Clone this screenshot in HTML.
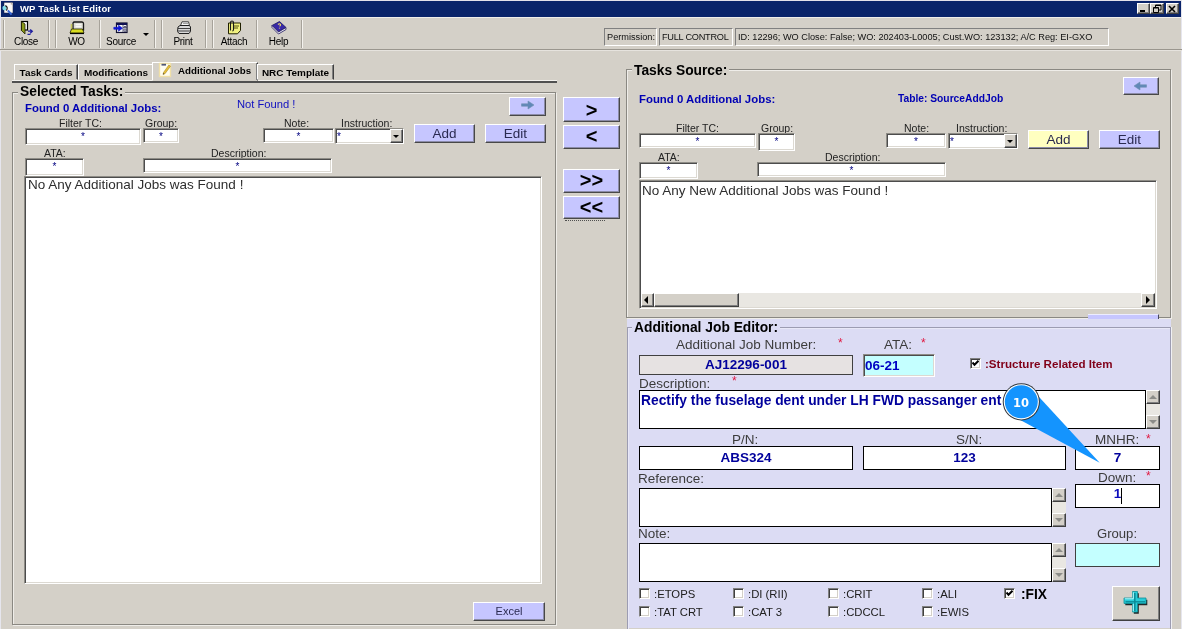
<!DOCTYPE html>
<html>
<head>
<meta charset="utf-8">
<title>WP Task List Editor</title>
<style>
html,body{margin:0;padding:0;}
body{width:1182px;height:629px;position:relative;overflow:hidden;background:#d4d0c8;font-family:"Liberation Sans",sans-serif;font-size:11px;color:#000;}
.a{position:absolute;box-sizing:border-box;}
.t{position:absolute;white-space:nowrap;line-height:1;}
/* classic sunken edit */
.sunk{background:#fff;border:1px solid;border-color:#8e8c86 #fff #fff #8e8c86;box-shadow:inset 1px 1px 0 #4c4c4c, inset -1px -1px 0 #dcd9d2;}
.flat{background:#fff;border:1px solid #000;}
/* lavender raised button */
.btn{background:#c6c6ff;border:1px solid;border-color:#fff #484848 #484848 #fff;box-shadow:inset -1px -1px 0 #8c8ca8;text-align:center;color:#2a2a50;}
.gbtn{background:#d4d0c8;border:1px solid;border-color:#fff #404040 #404040 #fff;box-shadow:inset -1px -1px 0 #808080;}
.grp{border:1px solid #8a8882;box-shadow:1px 1px 0 #efede9, inset 1px 1px 0 #efede9;}
.cap{font-weight:bold;font-size:13.800px;color:#000;padding:0 2px;}
.lbl{font-size:10.500px;color:#222;}
.star{color:#000080;font-size:10px;text-align:center;line-height:15px;}
.blueb{font-weight:bold;color:#0000b4;font-size:11.400px;}
.big{font-size:13.500px;color:#2e2e2e;}
.val{font-weight:bold;color:#00009c;font-size:13.500px;text-align:center;}
.cb{background:#fff;border:1px solid;border-color:#808080 #fff #fff #808080;box-shadow:inset 1px 1px 0 #404040, inset -1px -1px 0 #d4d0c8;width:11px;height:11px;}
.red{color:#e01840;font-size:12px;}
.sep{width:2px;border-left:1px solid #a6a29a;border-right:1px solid #f4f2ee;}
.sb{background:#e9e7e2;}
.elbl{font-size:13.500px;color:#3c3c3c;}
.clbl{font-size:11.300px;color:#202020;}
.val{line-height:18px;}
.up{width:0;height:0;border-left:4px solid transparent;border-right:4px solid transparent;border-bottom:4px solid #8c8c88;}
.dn{width:0;height:0;border-left:4px solid transparent;border-right:4px solid transparent;border-top:4px solid #8c8c88;}
.tab{font-weight:bold;font-size:9.950px;line-height:15px;text-align:center;border:1px solid;border-color:#fff #404040 transparent #fff;box-shadow:inset -1px 0 0 #808080;white-space:nowrap;color:#000;}
.tab.sel{background:#d4d0c8;line-height:15px;text-align:left;font-size:9.750px;}
.mv{font-weight:bold;font-size:20px;line-height:21px;color:#000;letter-spacing:0;}
.tb{font-size:10px;text-align:center;color:#000;letter-spacing:-0.3px;}
.stat{border:1px solid;border-color:#808080 #fff #fff #808080;font-size:9.200px;line-height:17px;padding-left:2px;white-space:nowrap;color:#111;overflow:hidden;}
</style>
</head>
<body>
<div id="root" style="position:absolute;left:0;top:0;width:1182px;height:629px;will-change:transform;">

<!-- title bar -->
<div class="a" style="left:0;top:0;width:1182px;height:1px;background:#e4e2ea;"></div>
<div class="a" style="left:0;top:0;width:1px;height:629px;background:#e6e6ee;"></div>
<div class="a" style="left:1181px;top:0;width:1px;height:629px;background:#e6e6ee;"></div>
<div class="a" style="left:1px;top:17px;width:1180px;height:1px;background:#f0eeea;"></div>
<div class="a" style="left:1px;top:1px;width:1180px;height:16px;background:#0a246a;"></div>
<svg class="a" style="left:1px;top:1px" width="15" height="16" viewBox="0 0 15 16">
  <rect x="3" y="1.300" width="9" height="10.700" fill="#fbf8f4" stroke="#101840" stroke-width="0.500"/>
  <path d="M9.800 1.300 L12 3.600 H9.800 Z" fill="#b8a898"/>
  <circle cx="3.600" cy="7.100" r="2.300" fill="#80dce8"/>
  <path d="M4.300 4.600 A2.700 2.700 0 0 1 5 9.500" fill="none" stroke="#101010" stroke-width="1.100"/>
  <path d="M6.800 9.300 L10.600 13.600" stroke="#3868d8" stroke-width="2"/>
</svg>
<div class="t" style="left:20px;top:3.500px;color:#fff;font-weight:bold;font-size:9.500px;letter-spacing:0.150px;">WP Task List Editor</div>
<!-- window buttons -->
<div class="a gbtn" style="left:1137px;top:3px;width:13px;height:11px;"></div>
<div class="a" style="left:1140px;top:10px;width:5px;height:2px;background:#000;"></div>
<div class="a gbtn" style="left:1150px;top:3px;width:14px;height:11px;"></div>
<svg class="a" style="left:1153px;top:4px" width="9" height="9" viewBox="0 0 9 9"><path d="M2.5 1 H8 V6 H6 M2.5 1 V3 M2.5 1.5 H8 M0.5 3.5 H5.5 V8.500 H0.5 Z M0.5 4 H5.5" fill="none" stroke="#000" stroke-width="1"/></svg>
<div class="a gbtn" style="left:1166px;top:3px;width:13px;height:11px;"></div>
<svg class="a" style="left:1168px;top:4.500px" width="9" height="8" viewBox="0 0 9 8"><path d="M1 1 L7 7 M7 1 L1 7" stroke="#000" stroke-width="1.6"/></svg>

<!-- toolbar -->
<div class="a" style="left:0;top:49px;width:1182px;height:1px;background:#9a968e;"></div>
<div class="a" style="left:0;top:50px;width:1182px;height:1px;background:#e6e3de;"></div>
<div class="a sep" style="left:3px;top:20px;height:28px;"></div>
<div class="a sep" style="left:48px;top:20px;height:28px;"></div>
<div class="a sep" style="left:55px;top:20px;height:28px;"></div>
<div class="a sep" style="left:99px;top:20px;height:28px;"></div>
<div class="a sep" style="left:154px;top:20px;height:28px;"></div>
<div class="a sep" style="left:161px;top:20px;height:28px;"></div>
<div class="a sep" style="left:205px;top:20px;height:28px;"></div>
<div class="a sep" style="left:212px;top:20px;height:28px;"></div>
<div class="a sep" style="left:256px;top:20px;height:28px;"></div>
<div class="a sep" style="left:301px;top:20px;height:28px;"></div>
<div class="t tb" style="left:14px;top:37px;width:23px;">Close</div>
<div class="t tb" style="left:66px;top:37px;width:21px;">WO</div>
<div class="t tb" style="left:106px;top:37px;width:30px;">Source</div>
<div class="t tb" style="left:172px;top:37px;width:22px;">Print</div>
<div class="t tb" style="left:220px;top:37px;width:28px;">Attach</div>
<div class="t tb" style="left:268px;top:37px;width:21px;">Help</div>
<div class="a" style="left:143px;top:33px;width:0;height:0;border-left:3px solid transparent;border-right:3px solid transparent;border-top:3px solid #000;"></div>
<!-- ICONS -->
<!-- close: door -->
<svg class="a" style="left:18px;top:19px" width="18" height="18" viewBox="18 19 18 18">
  <rect x="21.500" y="21.500" width="6" height="8.500" fill="#fff" stroke="#000" stroke-width="1.200"/>
  <path d="M21.500 21.500 L25 24 L25 34 L21.500 30.500 Z" fill="#8a9a18" stroke="#202000" stroke-width="0.800"/>
  <path d="M28 31.200 H31.800 M30.200 29.500 L32.300 31.300 L30.200 33.200 M27.500 34.300 H30.500" fill="none" stroke="#2020a0" stroke-width="1.300"/>
</svg>
<!-- WO: folder with doc -->
<svg class="a" style="left:68px;top:20px" width="18" height="16" viewBox="68 20 18 16">
  <path d="M73 23 Q73.500 22 74.500 22 H82 Q83.500 22.200 83.500 23.500 V30 H73 Z" fill="#dcdcd4" stroke="#181818" stroke-width="1.300"/>
  <path d="M75.500 24.800 H81.500 M75.500 26.800 H81.500" stroke="#fff" stroke-width="1.100"/>
  <path d="M71.500 24 V29.500" stroke="#c8c860" stroke-width="1.600"/>
  <path d="M71.500 29 H82.500 L84 33 H70 Z" fill="#d8dc20" stroke="#202000" stroke-width="0.800"/>
  <path d="M70 33.500 H84" stroke="#000" stroke-width="1.200"/>
</svg>
<!-- Source: table with arrow -->
<svg class="a" style="left:112px;top:21px" width="18" height="14" viewBox="112 21 18 14">
  <rect x="116.500" y="23" width="10.500" height="9.500" fill="#f4f4f4" stroke="#101030" stroke-width="1.200"/>
  <rect x="116.500" y="23" width="10.500" height="2" fill="#101050"/>
  <path d="M123 25 V32 M123 27.500 H127 M123 30 H127" stroke="#404060" stroke-width="0.800"/>
  <rect x="124" y="26" width="2" height="1" fill="#606080"/><rect x="124" y="28.500" width="2" height="1" fill="#606080"/><rect x="124" y="30.800" width="2" height="1" fill="#606080"/>
  <path d="M113.800 27.300 H118.500 V25.200 L122.500 28.200 L118.500 31.200 V29.200 H113.800 Z" fill="#1018d8" stroke="#1018c8" stroke-width="0.600"/>
</svg>
<!-- Print -->
<svg class="a" style="left:175px;top:20px" width="18" height="16" viewBox="175 20 18 16">
  <path d="M180.500 25.500 L182 21.800 H188.500 L189.500 25.500" fill="#f4f4f4" stroke="#303030" stroke-width="0.900"/>
  <path d="M183 23.500 H188" stroke="#808080" stroke-width="0.700"/>
  <path d="M178 27 L180 25.500 H189.500 L190.500 27 V31.500 L189 33.500 H179 L177.500 31.500 Z" fill="#d8d8d8" stroke="#202020" stroke-width="1"/>
  <path d="M178 28.500 H190.500 M178 31 H190.500" stroke="#303030" stroke-width="0.900"/>
</svg>
<!-- Attach -->
<svg class="a" style="left:226px;top:19px" width="18" height="17" viewBox="226 19 18 17">
  <path d="M228.500 23 H240.500 V30.500 L237.500 33.800 H228.500 Z" fill="#f0f080" stroke="#202000" stroke-width="1"/>
  <path d="M233 26 H239 M233 28 H238" stroke="#404000" stroke-width="0.900"/>
  <path d="M230.500 30.500 V22.800 Q230.500 21 232 21 Q233.500 21 233.500 22.800 V29.500 Q233.500 31 232.300 31" fill="none" stroke="#181818" stroke-width="1.100"/>
</svg>
<!-- Help: book -->
<svg class="a" style="left:270px;top:19px" width="18" height="17" viewBox="270 19 18 17">
  <path d="M272 25.500 L279.500 21.500 L286 27.500 L278.500 32 Z" fill="#3828a8" stroke="#181860" stroke-width="0.800"/>
  <path d="M272 25.500 L272 27.500 L278.500 34 L286 29.500 L286 27.500 L278.500 32 Z" fill="#e8e8f0" stroke="#201860" stroke-width="0.800"/>
  <path d="M278 24.500 Q279.500 23 280.500 24.500 Q280.800 25.500 279.600 26.300 M279.500 27.800 V28.500" fill="none" stroke="#f0e060" stroke-width="1.200"/>
</svg>

<!-- status panels -->
<div class="a stat" style="left:604px;top:28px;width:53px;height:18px;">Permission:</div>
<div class="a stat" style="left:659px;top:28px;width:74px;height:18px;"><span style="letter-spacing:-0.250px">FULL CONTROL</span></div>
<div class="a stat" style="left:735px;top:28px;width:374px;height:18px;">ID: 12296; WO Close: False; WO: 202403-L0005; Cust.WO: 123132; A/C Reg: EI-GXO</div>
<!-- MAIN -->
<!-- tabs -->
<div class="a" style="left:12px;top:80px;width:545px;height:1px;background:#f4f2ee;"></div>
<div class="a" style="left:12px;top:81px;width:545px;height:2px;background:#505050;"></div>
<div class="a tab" style="left:14px;top:64px;width:64px;height:16px;">Task Cards</div>
<div class="a tab" style="left:78px;top:64px;width:76px;height:16px;">Modifications</div>
<div class="a tab sel" style="left:152px;top:62px;width:106px;height:19px;padding-left:25px;">Additional Jobs</div>
<div class="a tab" style="left:257px;top:64px;width:77px;height:16px;">NRC Template</div>
<svg class="a" style="left:158px;top:62px" width="15" height="16" viewBox="0 0 15 16">
  <rect x="1.500" y="1.500" width="11" height="13" fill="#fffdf0" stroke="#f0e0a8" stroke-width="1.400"/>
  <rect x="3.500" y="1.800" width="4.500" height="1.800" fill="#505878"/>
  <path d="M5.500 10.500 L10.800 3 L12.500 4.200 L7 11.700 L5 12.500 Z" fill="#e8c038" stroke="#a88828" stroke-width="0.600"/>
  <path d="M5 12.500 L5.400 11 L6.300 11.800 Z" fill="#404040"/>
</svg>

<!-- left group -->
<div class="a grp" style="left:12px;top:92px;width:544px;height:533px;"></div>
<div class="t cap" style="left:18px;top:85px;background:#d4d0c8;">Selected Tasks:</div>
<div class="t blueb" style="left:25px;top:103px;">Found 0 Additional Jobs:</div>
<div class="t" style="left:237px;top:99px;font-size:11.200px;color:#1010c0;">Not Found !</div>
<div class="a btn" style="left:509px;top:97px;width:37px;height:19px;"></div>
<svg class="a" style="left:520px;top:100px" width="16" height="10" viewBox="0 0 16 10"><path d="M1.500 3.800 H8 V1 L14 5 L8 9 V6.200 H1.500 Z" fill="#6088b8" stroke="#7090b0" stroke-width="0.600"/></svg>

<div class="t lbl" style="left:59px;top:117.500px;">Filter TC:</div>
<div class="t lbl" style="left:145px;top:117.500px;">Group:</div>
<div class="t lbl" style="left:284px;top:117.500px;">Note:</div>
<div class="t lbl" style="left:341px;top:117.500px;">Instruction:</div>
<div class="a sunk star" style="left:25px;top:128px;width:116px;height:17px;">*</div>
<div class="a sunk star" style="left:143px;top:128px;width:36px;height:15px;">*</div>
<div class="a sunk star" style="left:263px;top:128px;width:71px;height:15px;">*</div>
<div class="a sunk star" style="left:335px;top:128px;width:69px;height:16px;text-align:left;padding-left:1px;">*</div>
<div class="a gbtn" style="left:390px;top:129px;width:13px;height:14px;"></div>
<div class="a" style="left:393px;top:135px;width:0;height:0;border-left:3.500px solid transparent;border-right:3.500px solid transparent;border-top:3.500px solid #000;"></div>
<div class="a btn" style="left:414px;top:124px;width:61px;height:19px;font-size:13.500px;line-height:18px;">Add</div>
<div class="a btn" style="left:485px;top:124px;width:61px;height:19px;font-size:13.500px;line-height:18px;">Edit</div>
<div class="t lbl" style="left:44px;top:148px;">ATA:</div>
<div class="t lbl" style="left:211px;top:148px;">Description:</div>
<div class="a sunk star" style="left:25px;top:158px;width:59px;height:18px;">*</div>
<div class="a sunk star" style="left:143px;top:158px;width:189px;height:15px;">*</div>
<div class="a sunk" style="left:24px;top:176px;width:518px;height:408px;"></div>
<div class="t big" style="left:28px;top:178px;">No Any Additional Jobs was Found !</div>
<div class="a btn" style="left:473px;top:602px;width:72px;height:19px;font-size:11px;line-height:17px;">Excel</div>

<!-- middle buttons -->
<div class="a btn mv" style="left:563px;top:97px;width:57px;height:25px;line-height:24px;">&gt;</div>
<div class="a btn mv" style="left:563px;top:125px;width:57px;height:24px;">&lt;</div>
<div class="a btn mv" style="left:563px;top:169px;width:57px;height:24px;">&gt;&gt;</div>
<div class="a btn mv" style="left:563px;top:196px;width:57px;height:23px;">&lt;&lt;</div>
<div class="a" style="left:565px;top:220px;width:40px;height:0;border-top:1px dotted #505050;"></div>
<!-- RIGHT -->
<div class="a grp" style="left:626px;top:69px;width:545px;height:249px;"></div>
<div class="t cap" style="left:632px;top:64px;background:#d4d0c8;">Tasks Source:</div>
<div class="t blueb" style="left:639px;top:94px;">Found 0 Additional Jobs:</div>
<div class="t blueb" style="left:898px;top:94px;font-size:10.250px;">Table: SourceAddJob</div>
<div class="a btn" style="left:1123px;top:77px;width:36px;height:18px;"></div>
<svg class="a" style="left:1132px;top:81px" width="16" height="10" viewBox="0 0 16 10"><path d="M14.500 3.800 H8 V1 L2 5 L8 9 V6.200 H14.500 Z" fill="#6088b8" stroke="#7090b0" stroke-width="0.600"/></svg>
<div class="t lbl" style="left:676px;top:122.500px;">Filter TC:</div>
<div class="t lbl" style="left:761px;top:122.500px;">Group:</div>
<div class="t lbl" style="left:904px;top:122.500px;">Note:</div>
<div class="t lbl" style="left:956px;top:122.500px;">Instruction:</div>
<div class="a sunk star" style="left:639px;top:133px;width:117px;height:15px;">*</div>
<div class="a sunk star" style="left:758px;top:133px;width:37px;height:18px;">*</div>
<div class="a sunk star" style="left:886px;top:133px;width:60px;height:15px;">*</div>
<div class="a sunk star" style="left:948px;top:133px;width:70px;height:16px;text-align:left;padding-left:1px;">*</div>
<div class="a gbtn" style="left:1004px;top:134px;width:13px;height:14px;"></div>
<div class="a" style="left:1007px;top:140px;width:0;height:0;border-left:3.500px solid transparent;border-right:3.500px solid transparent;border-top:3.500px solid #000;"></div>
<div class="a btn" style="left:1028px;top:130px;width:61px;height:19px;font-size:13.500px;line-height:18px;background:#ffffc0;">Add</div>
<div class="a btn" style="left:1099px;top:130px;width:61px;height:19px;font-size:13.500px;line-height:18px;">Edit</div>
<div class="t lbl" style="left:658px;top:152px;">ATA:</div>
<div class="t lbl" style="left:825px;top:152px;">Description:</div>
<div class="a sunk star" style="left:639px;top:162px;width:59px;height:17px;">*</div>
<div class="a sunk star" style="left:757px;top:162px;width:189px;height:15px;">*</div>
<div class="a sunk" style="left:639px;top:180px;width:518px;height:129px;"></div>
<div class="t big" style="left:642px;top:183.500px;">No Any New Additional Jobs was Found !</div>
<!-- hscroll -->
<div class="a sb" style="left:641px;top:293px;width:514px;height:14px;"></div>
<div class="a gbtn" style="left:641px;top:293px;width:13px;height:14px;"></div>
<div class="a" style="left:644px;top:296px;width:0;height:0;border-top:4px solid transparent;border-bottom:4px solid transparent;border-right:4px solid #000;"></div>
<div class="a gbtn" style="left:654px;top:293px;width:85px;height:14px;"></div>
<div class="a gbtn" style="left:1141px;top:293px;width:14px;height:14px;"></div>
<div class="a" style="left:1146px;top:296px;width:0;height:0;border-top:4px solid transparent;border-bottom:4px solid transparent;border-left:4px solid #000;"></div>
<!-- hidden btn sliver -->
<div class="a" style="left:1088px;top:314px;width:71px;height:5px;background:#c6c6ff;border-right:1px solid #484860;border-top:1px solid #ececff;"></div>

<!-- editor panel -->
<div class="a" style="left:627px;top:319px;width:544px;height:309px;background:#dcdcf4;"></div>
<div class="a" style="left:627px;top:327px;width:544px;height:310px;border:1px solid #9c9cb2;box-shadow:inset 1px 1px 0 #e8e8f8, 1px 0 0 #f0f0f4;"></div>
<div class="t cap" style="left:632px;top:321px;background:#dcdcf4;">Additional Job Editor:</div>
<!-- EDITOR -->
<div class="t elbl" style="left:676px;top:338px;">Additional Job Number:</div>
<div class="t red" style="left:838px;top:337px;">*</div>
<div class="t elbl" style="left:884px;top:338px;">ATA:</div>
<div class="t red" style="left:921px;top:337px;">*</div>
<div class="a flat val" style="left:639px;top:355px;width:214px;height:20px;background:#e6e2e2;border-color:#404040;">AJ12296-001</div>
<div class="a sunk val" style="left:863px;top:354px;width:72px;height:23px;background:#c4ffff;text-align:left;padding-left:1px;line-height:22px;color:#0000c4;">06-21</div>
<div class="a cb" style="left:970px;top:358px;"></div>
<svg class="a" style="left:972px;top:360px" width="7" height="7" viewBox="0 0 7 7"><path d="M0.500 2.500 L2.500 4.800 L6.500 0.800" fill="none" stroke="#000" stroke-width="2"/></svg>
<div class="t" style="left:985px;top:358px;font-weight:bold;font-size:11.600px;color:#800018;">:Structure Related Item</div>
<div class="t elbl" style="left:639px;top:377px;">Description:</div>
<div class="t red" style="left:732px;top:375px;">*</div>
<div class="a flat" style="left:639px;top:390px;width:507px;height:39px;"></div>
<div class="t val" style="left:641px;top:391.500px;text-align:left;font-size:13.800px;">Rectify the fuselage dent under LH FWD passanger ent</div>
<!-- vscroll desc -->
<div class="a sb" style="left:1146px;top:390px;width:14px;height:39px;"></div>
<div class="a gbtn vs" style="left:1146px;top:390px;width:14px;height:14px;"></div>
<div class="a up" style="left:1149px;top:395px;"></div>
<div class="a gbtn vs" style="left:1146px;top:415px;width:14px;height:14px;"></div>
<div class="a dn" style="left:1149px;top:420px;"></div>

<div class="t elbl" style="left:732px;top:433px;">P/N:</div>
<div class="t elbl" style="left:956px;top:433px;">S/N:</div>
<div class="t elbl" style="left:1095px;top:433px;">MNHR:</div>
<div class="t red" style="left:1146px;top:432.500px;">*</div>
<div class="a flat val" style="left:639px;top:446px;width:214px;height:24px;line-height:21px;">ABS324</div>
<div class="a flat val" style="left:863px;top:446px;width:203px;height:24px;line-height:21px;">123</div>
<div class="a flat val" style="left:1075px;top:446px;width:85px;height:24px;line-height:21px;">7</div>
<div class="t elbl" style="left:638px;top:472px;">Reference:</div>
<div class="t elbl" style="left:1098px;top:471px;">Down:</div>
<div class="t red" style="left:1146px;top:470px;">*</div>
<div class="a flat" style="left:639px;top:488px;width:413px;height:39px;"></div>
<div class="a sb" style="left:1052px;top:488px;width:14px;height:39px;"></div>
<div class="a gbtn vs" style="left:1052px;top:488px;width:14px;height:14px;"></div>
<div class="a up" style="left:1055px;top:493px;"></div>
<div class="a gbtn vs" style="left:1052px;top:513px;width:14px;height:14px;"></div>
<div class="a dn" style="left:1055px;top:518px;"></div>
<div class="a flat val" style="left:1075px;top:484px;width:85px;height:24px;color:#0c0cbc;">1</div>
<div class="a" style="left:1121px;top:488px;width:1px;height:16px;background:#000;"></div>
<div class="t elbl" style="left:638px;top:527px;">Note:</div>
<div class="t elbl" style="left:1097px;top:527px;font-size:13.100px;">Group:</div>
<div class="a flat" style="left:639px;top:543px;width:413px;height:39px;"></div>
<div class="a sb" style="left:1052px;top:543px;width:14px;height:39px;"></div>
<div class="a gbtn vs" style="left:1052px;top:543px;width:14px;height:14px;"></div>
<div class="a up" style="left:1055px;top:548px;"></div>
<div class="a gbtn vs" style="left:1052px;top:568px;width:14px;height:14px;"></div>
<div class="a dn" style="left:1055px;top:573px;"></div>
<div class="a flat" style="left:1075px;top:543px;width:85px;height:24px;background:#c4ffff;border-color:#404040;"></div>

<!-- checkboxes -->
<div class="a cb" style="left:639px;top:588px;"></div><div class="t clbl" style="left:654px;top:589px;">:ETOPS</div>
<div class="a cb" style="left:733px;top:588px;"></div><div class="t clbl" style="left:748px;top:589px;">:DI (RII)</div>
<div class="a cb" style="left:828px;top:588px;"></div><div class="t clbl" style="left:843px;top:589px;">:CRIT</div>
<div class="a cb" style="left:922px;top:588px;"></div><div class="t clbl" style="left:937px;top:589px;">:ALI</div>
<div class="a cb" style="left:1004px;top:588px;"></div>
<svg class="a" style="left:1006px;top:590px" width="7" height="7" viewBox="0 0 7 7"><path d="M0.500 2.500 L2.500 4.800 L6.500 0.800" fill="none" stroke="#000" stroke-width="2"/></svg>
<div class="t" style="left:1021px;top:586.500px;font-weight:bold;font-size:13.800px;color:#000;transform:scaleY(1.1);transform-origin:0 0;">:FIX</div>
<div class="a cb" style="left:639px;top:606px;"></div><div class="t clbl" style="left:654px;top:607px;">:TAT CRT</div>
<div class="a cb" style="left:733px;top:606px;"></div><div class="t clbl" style="left:748px;top:607px;">:CAT 3</div>
<div class="a cb" style="left:828px;top:606px;"></div><div class="t clbl" style="left:843px;top:607px;">:CDCCL</div>
<div class="a cb" style="left:922px;top:606px;"></div><div class="t clbl" style="left:937px;top:607px;">:EWIS</div>
<!-- plus button -->
<div class="a gbtn" style="left:1112px;top:586px;width:48px;height:35px;"></div>
<svg class="a" style="left:1122px;top:589px" width="26" height="26" viewBox="1122 589 26 26">
  <path d="M1133 592.500 H1138 V599 H1146.500 V604.500 H1138 V613 H1133 V604.500 H1124.500 V599 H1133 Z" fill="#202828" transform="translate(0.800,0.800)"/>
  <path d="M1132.500 591.500 H1137.500 V598 H1146 V603.500 H1137.500 V612 H1132.500 V603.500 H1124 V598 H1132.500 Z" fill="#28ccd8" stroke="#109098" stroke-width="0.800"/>
  <path d="M1134.800 593 V611" stroke="#0c8c98" stroke-width="1.600"/>
  <path d="M1125.500 601.800 H1145" stroke="#0c8c98" stroke-width="1.400"/>
  <path d="M1133.300 592.300 V598.800 H1124.800" fill="none" stroke="#b8f8fc" stroke-width="1"/>
  <path d="M1133.300 604 V611.300" fill="none" stroke="#b8f8fc" stroke-width="1"/>
</svg>
<!-- callout -->
<svg class="a" style="left:995px;top:380px" width="115" height="90" viewBox="995 380 115 90">
  <path d="M1034 391.500 L1099.700 462.800 L1010 414.500 Z" fill="#1494fe"/>
  <circle cx="1021.300" cy="401.800" r="18.600" fill="#30363c"/>
  <circle cx="1021.300" cy="401.800" r="17.600" fill="#fff"/>
  <circle cx="1021.300" cy="401.800" r="16.500" fill="#1494fe"/>
  <text x="1021" y="407.300" text-anchor="middle" font-family="DejaVu Sans, Liberation Sans, sans-serif" font-weight="bold" font-size="11.500" fill="#fff">10</text>
</svg>
</div>
</body>
</html>
